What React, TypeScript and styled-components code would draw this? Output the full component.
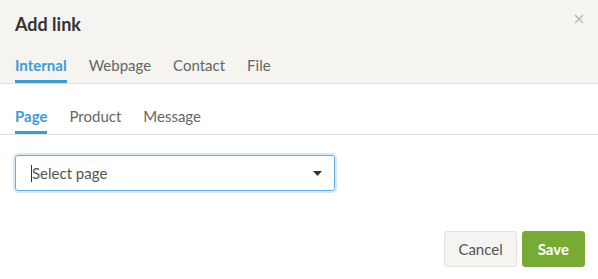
import React, { useState } from 'react';
import styled, { createGlobalStyle } from 'styled-components';

const blue = '#3f9bd5';
const cream = '#f5f4f0';

const GlobalStyle = createGlobalStyle`
  body {
    margin: 0;
    background: #fff;
    font-family: Lato, "Open Sans", sans-serif;
  }
`;

const Dialog = styled.div`
  width: 598px;
  height: 279px;
  background: #fff;
  display: flex;
  flex-direction: column;
`;

const Header = styled.div`
  background: ${cream};
  border-bottom: 1px solid #e2e2e2;
  padding: 0 15px;
  position: relative;
`;

const Title = styled.h1`
  margin: 0;
  padding-top: 14px;
  height: 20px;
  line-height: 20px;
  font-size: 18px;
  font-weight: 700;
  color: #333;
`;

const Close = styled.button`
  position: absolute;
  top: 12px;
  right: 13px;
  border: 0;
  background: none;
  padding: 0;
  width: 12px;
  height: 12px;
  cursor: pointer;
`;

const TabRow = styled.div<{ $top: number }>`
  display: flex;
  gap: 22px;
  padding-top: ${p => p.$top}px;
`;

const Tab = styled.div<{ $active?: boolean }>`
  font-size: 15px;
  line-height: 18px;
  padding-bottom: 6px;
  color: ${p => (p.$active ? blue : '#666')};
  font-weight: ${p => (p.$active ? 700 : 400)};
  border-bottom: 3px solid ${p => (p.$active ? blue : 'transparent')};
  cursor: pointer;
`;

const SubTabs = styled.div`
  border-bottom: 1px solid #e2e2e2;
  padding: 0 15px;
`;

const Body = styled.div`
  padding: 20px 15px 0;
`;

const Select = styled.div`
  width: 320px;
  height: 36px;
  box-sizing: border-box;
  border: 1px solid #66aee0;
  border-radius: 3px;
  box-shadow: 0 0 0 2px #d6e8f5;
  display: flex;
  align-items: center;
  padding: 0 12px 0 15px;
  font-size: 15px;
  color: #555;
`;

const Caret = styled.span`
  width: 1px;
  height: 17px;
  background: #333;
`;

const SelectText = styled.span`
  flex: 1;
`;

const Footer = styled.div`
  margin-top: auto;
  display: flex;
  justify-content: flex-end;
  gap: 5px;
  padding: 0 13px 12px 0;
`;

const Button = styled.button<{ $primary?: boolean }>`
  height: 36px;
  box-sizing: border-box;
  border-radius: 3px;
  font-family: inherit;
  font-size: 15px;
  padding: 0 ${p => (p.$primary ? 15 : 13)}px;
  cursor: pointer;
  border: 1px solid ${p => (p.$primary ? '#78ab33' : '#e3e1dc')};
  background: ${p => (p.$primary ? '#78ab33' : cream)};
  color: ${p => (p.$primary ? '#fff' : '#555')};
  font-weight: ${p => (p.$primary ? 700 : 400)};
`;

const mainTabs = ['Internal', 'Webpage', 'Contact', 'File'];
const subTabs = ['Page', 'Product', 'Message'];

export default function App() {
  const [tab, setTab] = useState('Internal');
  const [sub, setSub] = useState('Page');
  return (
    <>
      <GlobalStyle />
      <Dialog>
        <Header>
          <Title>Add link</Title>
          <Close aria-label="Close">
            <svg width="10" height="10" viewBox="0 0 10 10">
              <path d="M1 1L9 9M9 1L1 9" stroke="#b5b5b5" strokeWidth="1.4" />
            </svg>
          </Close>
          <TabRow $top={22}>
            {mainTabs.map(t => (
              <Tab key={t} $active={t === tab} onClick={() => setTab(t)}>{t}</Tab>
            ))}
          </TabRow>
        </Header>
        <SubTabs>
          <TabRow $top={23}>
            {subTabs.map(t => (
              <Tab key={t} $active={t === sub} onClick={() => setSub(t)}>{t}</Tab>
            ))}
          </TabRow>
        </SubTabs>
        <Body>
          <Select>
            <Caret />
            <SelectText>Select page</SelectText>
            <svg width="9" height="5" viewBox="0 0 9 5">
              <path d="M0 0H9L4.5 5Z" fill="#333" />
            </svg>
          </Select>
        </Body>
        <Footer>
          <Button>Cancel</Button>
          <Button $primary>Save</Button>
        </Footer>
      </Dialog>
    </>
  );
}
